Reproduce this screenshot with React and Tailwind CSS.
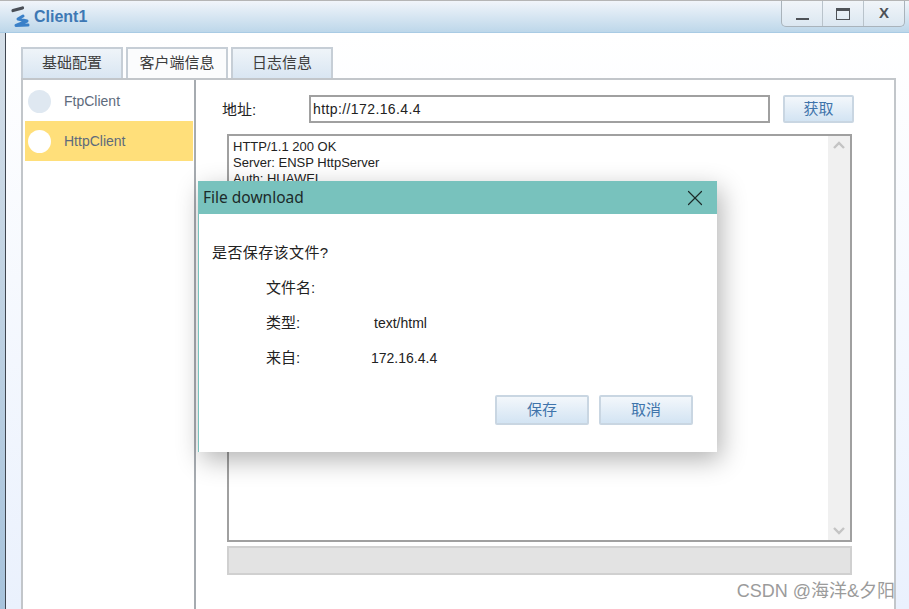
import { X } from 'lucide-react'

const sans = 'font-["Liberation_Sans","Noto_Sans_CJK_SC",sans-serif]'
const btn =
  'flex items-center justify-center rounded-[2px] border-2 border-[#c9d6e2] bg-gradient-to-b from-[#f3f7fb] to-[#d3e4f3] text-[15px] text-[#3f74ab]'

function Logo() {
  return (
    <svg width="22" height="24" viewBox="0 0 22 24" className="shrink-0">
      <path d="M2 5.5 L11.5 3" stroke="#4a4f57" strokeWidth="3.2" strokeLinecap="round" />
      <path d="M12 11 L7 14 L16 16 L5 20.5 L17 20" stroke="#3a80c8" strokeWidth="3" fill="none" strokeLinecap="round" strokeLinejoin="round" />
    </svg>
  )
}

function WindowButtons() {
  return (
    <div className="flex h-[26px] w-[124px] rounded-b-[5px] border-x border-b border-[#a9b3bb] bg-gradient-to-b from-[#f1f5f9] to-[#dbe7f1]">
      <div className="flex w-[41px] items-end justify-center border-r border-[#b9c3cb] pb-[6px]">
        <div className="h-[2px] w-[13px] bg-[#4e5257]" />
      </div>
      <div className="flex w-[41px] items-center justify-center border-r border-[#b9c3cb]">
        <div className="h-[12px] w-[14px] border border-[#4e5257] border-t-[3px]" />
      </div>
      <div className="flex flex-1 items-center justify-center text-[15px] font-bold text-[#4e5257]">X</div>
    </div>
  )
}

function Tab({ label, active }) {
  return (
    <div
      className={`flex h-[31px] w-[102px] items-center justify-center border-2 border-b-0 border-[#c6ced6] text-[15px] text-[#3d3d3d] ${
        active ? 'bg-[#fbfcfd]' : 'bg-gradient-to-b from-[#eff4f9] to-[#d9e6f2]'
      }`}
    >
      {label}
    </div>
  )
}

function ClientRow({ name, selected }) {
  return (
    <div className={`flex h-[40px] items-center gap-[13px] pl-[3px] ${selected ? 'bg-[#ffdf7a]' : ''}`}>
      <div className={`h-[23px] w-[23px] rounded-full ${selected ? 'bg-white' : 'bg-[#dfe8f1]'}`} />
      <span className="text-[14px] text-[#5e6b7c]">{name}</span>
    </div>
  )
}

function InfoRow({ label, value, indent }) {
  return (
    <div className="flex h-[35px] items-center pl-[68px] text-[15px] text-[#222]">
      <span className="w-[105px] shrink-0">{label}</span>
      <span className="text-[14px]" style={{ marginLeft: indent }}>{value}</span>
    </div>
  )
}

function DownloadDialog() {
  return (
    <div className="absolute left-[198px] top-[181px] h-[271px] w-[519px] border-l border-[#78c2bd] bg-white shadow-[4px_8px_24px_rgba(0,0,0,0.3)]">
      <div className="-ml-px flex h-[33px] items-center justify-between bg-[#78c2bd] pl-[5px] pr-[9px]">
        <span className="font-['Noto_Sans'] text-[15.5px] text-[#1c2b2a]">File download</span>
        <X size={26} strokeWidth={1.1} className="text-[#1c2b2a]" />
      </div>
      <p className="ml-[13px] mt-[28px] text-[15px] leading-[22px] tracking-[0.4px] text-[#222]">是否保存该文件?</p>
      <div className="mt-[7px] -ml-[1px]">
        <InfoRow label="文件名:" value="" indent={0} />
        <InfoRow label="类型:" value="text/html" indent={3} />
        <InfoRow label="来自:" value="172.16.4.4" indent={0} />
      </div>
      <div className="mt-[19px] flex justify-end gap-[10px] pr-[24px]">
        <div className={`${btn} h-[30px] w-[94px]`}>保存</div>
        <div className={`${btn} h-[30px] w-[94px]`}>取消</div>
      </div>
    </div>
  )
}

export default function App() {
  return (
    <div className={`relative flex h-[609px] w-[909px] flex-col overflow-hidden bg-white ${sans}`}>
      <div className="flex h-[33px] shrink-0 items-start justify-between border-t border-[#b5b5b5] border-b border-b-[#a9cbe4] bg-gradient-to-b from-[#f1f5fa] to-[#bdd7ea] pl-[11px] pr-[4px]">
        <div className="flex h-[31px] items-center gap-[1px]">
          <Logo />
          <span className="text-[16px] font-bold text-[#3d78b4]">Client1</span>
        </div>
        <WindowButtons />
      </div>

      <div className="flex min-h-0 flex-1">
        <div className="w-[5px] shrink-0 bg-gradient-to-b from-[#d5dfe8] to-[#a7c3dc]" />
        <div className="w-[1px] shrink-0 bg-[#3f4650]" />
        <div className="flex min-w-0 flex-1 flex-col bg-gradient-to-b from-white to-[#eaf1fd] pl-[15px] pt-[14px]">
          <div className="flex gap-[3px]">
            <Tab label="基础配置" />
            <Tab label="客户端信息" active />
            <Tab label="日志信息" />
          </div>
          <div className="flex min-h-0 w-[875px] flex-1 border-x-2 border-t-2 border-[#c2c6ca] bg-white">
            <div className="w-[173px] shrink-0 border-r-2 border-[#a6abb0] pl-[2px] pr-[1px] pt-[1px]">
              <ClientRow name="FtpClient" />
              <ClientRow name="HttpClient" selected />
            </div>
            <div className="flex min-w-0 flex-1 flex-col pl-[31px] pt-[15px]">
              <div className="flex h-[28px] items-center">
                <span className="-ml-[5px] mt-[2px] w-[87px] text-[15px] text-[#222]">地址:</span>
                <div className="flex h-[28px] w-[461px] items-center border-2 border-[#a0a0a0] pl-[2px] text-[14px] tracking-[0.4px] text-[#222]">
                  http://172.16.4.4
                </div>
                <div className={`${btn} ml-[13px] h-[28px] w-[71px]`}>获取</div>
              </div>
              <div className="mt-[11px] flex h-[408px] w-[625px] border-2 border-[#a0a0a0]">
                <div className="flex-1 pl-[4px] pt-[3px] text-[13px] leading-[16px] text-[#222]">
                  <p>HTTP/1.1 200 OK</p>
                  <p>Server: ENSP HttpServer</p>
                  <p>Auth: HUAWEI</p>
                </div>
                <div className="flex w-[22px] flex-col items-center justify-between bg-[#f0f0f0] py-[5px]">
                  <svg width="12" height="8" viewBox="0 0 12 8" fill="none" stroke="#c4c4c4" strokeWidth="2.4"><path d="M1 7 L6 2 L11 7" /></svg>
                  <svg width="12" height="8" viewBox="0 0 12 8" fill="none" stroke="#c4c4c4" strokeWidth="2.4"><path d="M1 1 L6 6 L11 1" /></svg>
                </div>
              </div>
              <div className="mt-[4px] h-[29px] w-[625px] border-2 border-[#d0d0d0] bg-[#e3e3e3]" />
            </div>
          </div>
        </div>
      </div>

      <DownloadDialog />
      <span className="absolute right-[14px] top-[580px] text-[18px] leading-[22px] text-[#9b9b9b]">CSDN @海洋&amp;夕阳</span>
    </div>
  )
}
